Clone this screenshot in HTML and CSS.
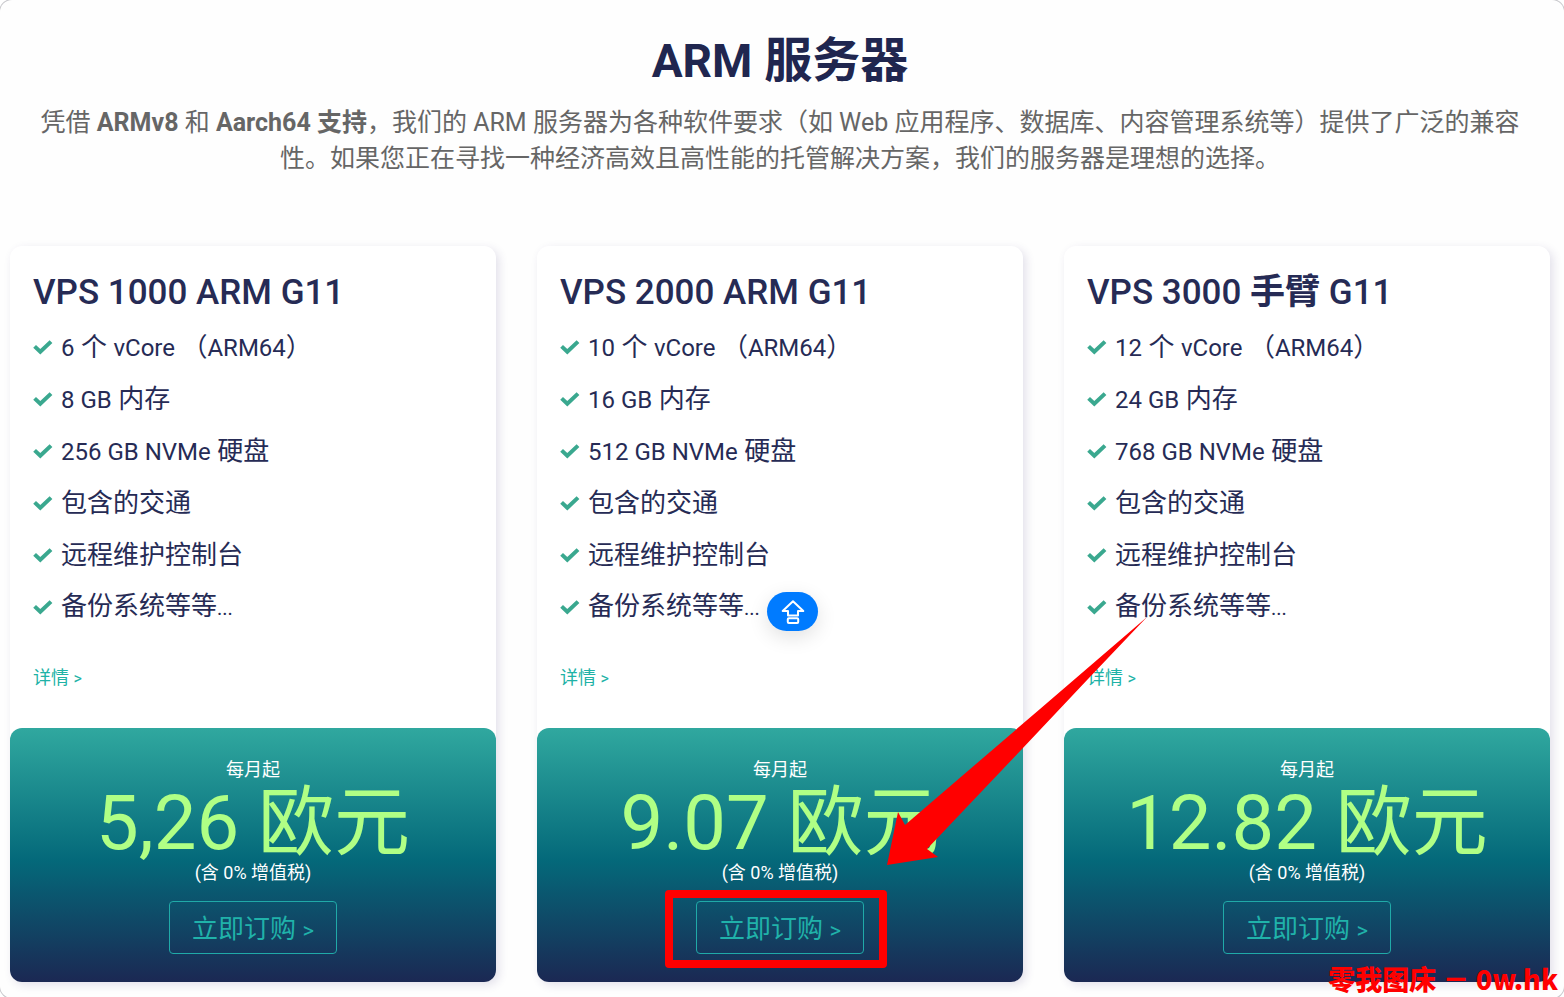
FILE: index.html
```html
<!DOCTYPE html>
<html lang="zh-CN">
<head>
<meta charset="utf-8">
<meta name="viewport" content="width=device-width, initial-scale=1">
<title>ARM 服务器</title>
<link rel="stylesheet" href="styles.css">
</head>
<body>
<svg class="sprite" aria-hidden="true">
  <symbol id="check" viewBox="0 0 20 16"><path d="M1.6 7.4 L7.3 12.8 L18 2.6" fill="none" stroke="#3aa88f" stroke-width="4"/></symbol>
</svg>
<main class="page">
  <header class="intro">
    <h1 class="intro-title"><span class="latin">ARM</span> 服务器</h1>
    <p class="intro-text">凭借 <strong>ARMv8</strong> 和 <strong>Aarch64 支持</strong>，我们的 ARM 服务器为各种软件要求（如 Web 应用程序、数据库、内容管理系统等）提供了广泛的兼容性。如果您正在寻找一种经济高效且高性能的托管解决方案，我们的服务器是理想的选择。</p>
  </header>
  <section class="plans">
    <article class="card">
      <div class="card-body">
        <h2 class="card-title">VPS 1000 ARM G11</h2>
        <ul class="features">
          <li><svg class="check"><use href="#check"/></svg><span><span class="latin">6</span> 个 <span class="latin">vCore</span> （<span class="latin">ARM64</span>）</span></li>
          <li><svg class="check"><use href="#check"/></svg><span><span class="latin">8 GB</span> 内存</span></li>
          <li><svg class="check"><use href="#check"/></svg><span><span class="latin">256 GB NVMe</span> 硬盘</span></li>
          <li><svg class="check"><use href="#check"/></svg><span>包含的交通</span></li>
          <li><svg class="check"><use href="#check"/></svg><span>远程维护控制台</span></li>
          <li><svg class="check"><use href="#check"/></svg><span>备份系统等等<span class="dots">...</span></span></li>
        </ul>
        <a class="details" href="#">详情 <span class="chevron">&gt;</span></a>
      </div>
      <div class="price-box">
        <p class="note">每月起</p>
        <p class="price">5,26 欧元</p>
        <p class="note">(含 0% 增值税)</p>
        <div class="order-wrap"><button class="order" type="button">立即订购 <span class="chevron">&gt;</span></button></div>
      </div>
    </article>
    <article class="card">
      <div class="card-body">
        <h2 class="card-title">VPS 2000 ARM G11</h2>
        <ul class="features">
          <li><svg class="check"><use href="#check"/></svg><span><span class="latin">10</span> 个 <span class="latin">vCore</span> （<span class="latin">ARM64</span>）</span></li>
          <li><svg class="check"><use href="#check"/></svg><span><span class="latin">16 GB</span> 内存</span></li>
          <li><svg class="check"><use href="#check"/></svg><span><span class="latin">512 GB NVMe</span> 硬盘</span></li>
          <li><svg class="check"><use href="#check"/></svg><span>包含的交通</span></li>
          <li><svg class="check"><use href="#check"/></svg><span>远程维护控制台</span></li>
          <li><svg class="check"><use href="#check"/></svg><span>备份系统等等<span class="dots">...</span></span></li>
        </ul>
        <a class="details" href="#">详情 <span class="chevron">&gt;</span></a>
      </div>
      <div class="price-box">
        <p class="note">每月起</p>
        <p class="price">9.07 欧元</p>
        <p class="note">(含 0% 增值税)</p>
        <div class="order-wrap"><button class="order" type="button">立即订购 <span class="chevron">&gt;</span></button><span class="marker"></span></div>
      </div>
      <button class="to-top" type="button" aria-label="回到顶部">
        <svg width="26" height="26" viewBox="0 0 26 26" fill="none" stroke="#fff" stroke-width="2" stroke-linejoin="round"><path d="M13 2.2 L23.3 12 H18 V16.5 H8 V12 H2.7 Z"/><rect x="7.8" y="19.3" width="10.4" height="4.6" rx="1"/></svg>
      </button>
      <svg class="arrow" viewBox="0 0 260 248" aria-hidden="true"><path d="M0 248 L11 195 L18 208 L153 92 L260 0 L201 62 L135 132 L40 232 L51 240 Z" fill="#ff0000"/></svg>
    </article>
    <article class="card">
      <div class="card-body">
        <h2 class="card-title">VPS 3000 <b>手臂</b> G11</h2>
        <ul class="features">
          <li><svg class="check"><use href="#check"/></svg><span><span class="latin">12</span> 个 <span class="latin">vCore</span> （<span class="latin">ARM64</span>）</span></li>
          <li><svg class="check"><use href="#check"/></svg><span><span class="latin">24 GB</span> 内存</span></li>
          <li><svg class="check"><use href="#check"/></svg><span><span class="latin">768 GB NVMe</span> 硬盘</span></li>
          <li><svg class="check"><use href="#check"/></svg><span>包含的交通</span></li>
          <li><svg class="check"><use href="#check"/></svg><span>远程维护控制台</span></li>
          <li><svg class="check"><use href="#check"/></svg><span>备份系统等等<span class="dots">...</span></span></li>
        </ul>
        <a class="details" href="#">详情 <span class="chevron">&gt;</span></a>
      </div>
      <div class="price-box">
        <p class="note">每月起</p>
        <p class="price">12.82 欧元</p>
        <p class="note">(含 0% 增值税)</p>
        <div class="order-wrap"><button class="order" type="button">立即订购 <span class="chevron">&gt;</span></button></div>
      </div>
    </article>
  </section>
  <p class="watermark">零我图床 － 0w.hk</p>
</main>
</body>
</html>
```
FILE: styles.css
```css
* {
  box-sizing: border-box;
}

body {
  margin: 0;
  background: #fff;
  color: #262b55;
  font-family: Roboto, "Noto Sans CJK SC", sans-serif;
}

h1, h2, p, ul {
  margin: 0;
  padding: 0;
}

.sprite {
  position: absolute;
  width: 0;
  height: 0;
}

.page {
  position: relative;
  min-height: 100vh;
  padding: 31px 14px 16px 10px;
  border-radius: 12px;
  background: #fefefe;
  box-shadow: 0 0 0 1px #c8c8cc;
  overflow: hidden;
}

.intro {
  padding: 0 24px;
  text-align: center;
}

.intro-title {
  font-size: 48px;
  line-height: 60px;
  font-weight: 700;
  color: #20264f;
}

.intro-title .latin {
  font-size: 46px;
}

.intro-text {
  margin-top: 14px;
  font-size: 25px;
  line-height: 36px;
  color: #666;
}

.intro-text strong {
  font-weight: 700;
}

.plans {
  display: grid;
  grid-template-columns: repeat(3, minmax(0, 1fr));
  gap: 41px;
  margin-top: 69px;
}

.card {
  position: relative;
  display: flex;
  flex-direction: column;
  border-radius: 12px;
  background: #fff;
  box-shadow: 3px 3px 10px rgba(60, 40, 110, 0.14);
}

.card-body {
  flex: 1;
  padding: 23px 23px 35px;
}

.card-title {
  font-size: 35px;
  line-height: 48px;
  font-weight: 500;
}

.features {
  margin-top: 4px;
  list-style: none;
  font-size: 26px;
  line-height: 52px;
}

.features li {
  display: flex;
  align-items: center;
  gap: 8px;
  height: 52px;
  white-space: nowrap;
}

.features .latin {
  font-size: 24px;
}

.features .dots {
  font-size: 20px;
}

.check {
  width: 20px;
  height: 16px;
}

.details {
  display: block;
  margin-top: 31px;
  font-size: 18px;
  line-height: 28px;
  color: #20b2a6;
  text-decoration: none;
}

.details .chevron {
  font-size: 16px;
}

.price-box {
  padding: 30px 20px 28px;
  border-radius: 12px;
  background: linear-gradient(#30a89f 0%, #04697a 52%, #1b2853 100%);
  color: #fff;
  text-align: center;
}

.note {
  font-size: 18px;
  line-height: 24px;
}

.price {
  padding-top: 3px;
  font-size: 76px;
  line-height: 76px;
  color: #b0ff85;
  white-space: nowrap;
}

.order-wrap {
  position: relative;
  width: 168px;
  margin: 16px auto 0;
}

.order {
  width: 100%;
  height: 53px;
  padding: 0 0 3px;
  border: 1px solid #20aaa8;
  border-radius: 4px;
  background: transparent;
  color: #20b2aa;
  font: inherit;
  font-size: 26px;
}

.order .chevron {
  font-size: 22px;
}

.marker {
  position: absolute;
  inset: -11px -23px -14px -31px;
  border: 8px solid #ff0000;
  border-radius: 4px;
  pointer-events: none;
}

.to-top {
  position: absolute;
  left: 230px;
  bottom: 351px;
  display: grid;
  place-items: center;
  width: 51px;
  height: 39px;
  padding: 0;
  border: 0;
  border-radius: 20px;
  background: #007bff;
  box-shadow: 0 6px 20px rgba(0, 0, 0, 0.12);
}

.arrow {
  position: absolute;
  z-index: 2;
  right: -124px;
  bottom: 117px;
  width: 260px;
  height: 248px;
  pointer-events: none;
}

.watermark {
  position: absolute;
  right: 6px;
  bottom: 1px;
  font-family: "Noto Sans CJK SC", sans-serif;
  font-size: 27px;
  line-height: 36px;
  font-weight: 900;
  color: #ff0000;
}
```
